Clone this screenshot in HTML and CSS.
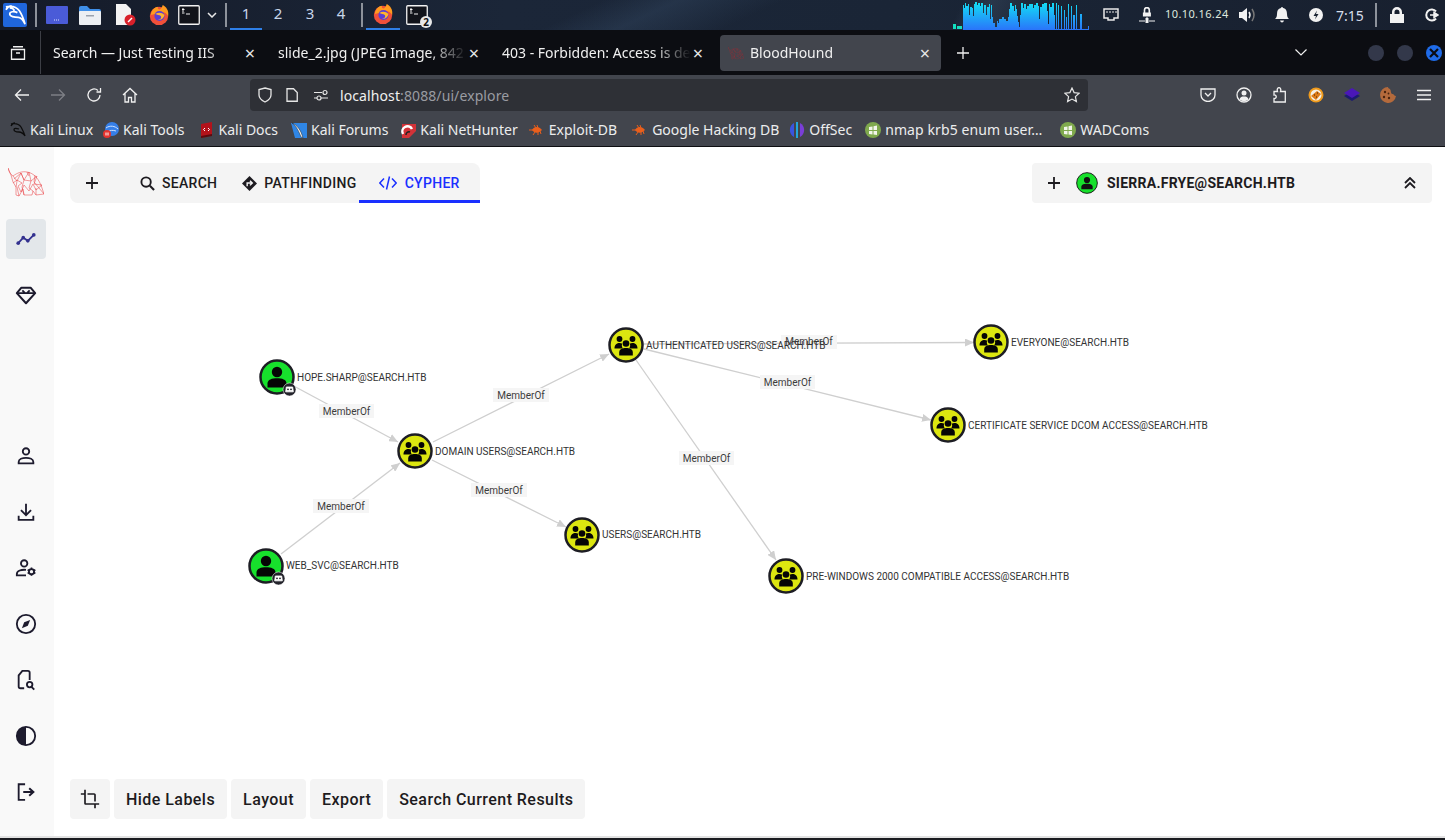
FILE: index.html
```html
<!DOCTYPE html>
<html lang="en">
<head>
    <meta charset="UTF-8">
    <title>BloodHound</title>
    <link rel="stylesheet" href="styles.css">
</head>
<body>

    <svg class="sprites" width="0" height="0">
        <defs>
            <linearGradient id="wave" x1="0" y1="0" x2="0" y2="1">
                <stop offset="0" stop-color="#12e0f5"/>
                <stop offset="1" stop-color="#2a74fa"/>
            </linearGradient>
            <marker id="arrow" markerUnits="userSpaceOnUse" markerWidth="10" markerHeight="8" refX="9" refY="4" orient="auto">
                <path d="M0 0L9 4L0 8z" fill="#cfcfcf"/>
            </marker>
            <symbol id="fox" viewBox="0 0 24 24">
                <circle cx="12" cy="13" r="10" fill="#f0503a"/>
                <path d="M3 12C4 6 8 3 11 3c-1 2 0 3 2 3 2-2 3-4 3-5 4 2 7 6 6 12-2-3-4-4-6-4z" fill="#ff9a1f"/>
                <circle cx="12.500" cy="13" r="5.500" fill="#5a3fd6"/>
                <path d="M8 11c3-2 7-2 10 1-1 4-4 6-7 5 3 0 4-2 3-4-2-1-4-1-6-2z" fill="#ffb52e"/>
            </symbol>
            <symbol id="term" viewBox="0 0 22 20">
                <rect x="0.750" y="0.750" width="20.500" height="18.500" rx="1" fill="#11131a" stroke="#f2f2f2" stroke-width="1.300"/>
                <path d="M4 4.500h2.500M5 3v4M4 8h2.500M8 9h4" stroke="#f2f2f2" stroke-width="1" fill="none"/>
            </symbol>
            <symbol id="hound" viewBox="0 0 36 30">
                <g fill="none" stroke="currentColor" stroke-width="0.500">
                    <path d="M0 1C1 5 2 7 5 9 9 6 14 4 19 5 26 6 31 12 34 21L36 27 28 28 25 24 24 28 16 28 15 22 11 29 8 28 8 20 5 15 3 8z"/>
                    <path d="M5 9l4 5 4-8 3 7 5-8 2 9 6-5-3 8 8 1-6 5-3-6-4 7-5-6-3 7-3-6 4-3-5-3-4 3M13 6l3 7 7 1M9 14l-1 6M16 13l-2 7M23 14l-2 7M26 15l5 6M21 21l4 3M28 21l0 7M14 20l2 8M31 21l5 6M9 20l2 9M19 5l2 4M27 8l-1 7M6 12l7-6"/>
                </g>
            </symbol>
            <symbol id="user" viewBox="-12 -12 24 24">
                <circle cx="0" cy="-5" r="5.200"/>
                <path d="M-9.500 10.500V6.500C-9.500 2.500-5 1.200 0 1.200S9.500 2.500 9.500 6.500V10.500z"/>
            </symbol>
            <symbol id="group" viewBox="-12 -12 24 24">
                <circle cx="-6.500" cy="-6" r="2.900"/>
                <circle cx="6.500" cy="-6" r="2.900"/>
                <path d="M-11.500 3.500C-11.500-.5-9-2-6.500-2c1.200 0 2 .3 2.800.8-.8 1.200-.6 3 .6 4.700z"/>
                <path d="M11.500 3.500C11.500-.5 9-2 6.500-2c-1.200 0-2 .3-2.800.8.800 1.200.6 3-.6 4.700z"/>
                <circle cx="0" cy="-1.500" r="3.300"/>
                <path d="M-6.800 10.500V7.500C-6.800 4-3.500 3 0 3S6.800 4 6.800 7.500V10.500z"/>
            </symbol>
            <symbol id="robot" viewBox="-6 -6 12 12">
                <path d="M-3.800-3H3.800L4.600 2.800H-4.600z" fill="#fff" stroke="#fff" stroke-linejoin="round"/>
                <circle cx="-1.800" cy="-.2" r="1.100" fill="#23232b"/>
                <circle cx="1.800" cy="-.2" r="1.100" fill="#23232b"/>
            </symbol>
        </defs>
    </svg>

    <header class="panel">
        <div class="kali-logo">
            <svg viewBox="0 0 24 24" width="23" height="23"><path d="M2 3c6-1.500 11 0 14 4 2 3 4 7 6 14-2-4-5-7-7-7-4 0-9-1-9-3.500S10 7 14 9M8 2C6 2 4 3 2 6M6 4c2 0 4 1 5 3" fill="none" stroke="#fff" stroke-width="1.800"/></svg>
        </div>
        <span class="panel-sep"></span>
        <div class="launchers">
            <svg class="launch" viewBox="0 0 22 18" width="22" height="18"><rect width="22" height="18" rx="1" fill="#4a5bd8"/><path d="M8 14h6" stroke="#dfe3ff" stroke-dasharray="1 1"/></svg>
            <svg class="launch" viewBox="0 0 22 19" width="22" height="19"><path d="M0 2q0-2 2-2h6l3 3h9q2 0 2 2v2H0z" fill="#3f8fe8"/><rect y="5" width="22" height="14" rx="1" fill="#eceff3"/><rect x="7" y="9" width="8" height="1.500" fill="#9aa2ad"/></svg>
            <svg class="launch launch-doc" viewBox="0 0 22 22" width="22" height="22"><path d="M1 0h10l5 5v16H1z" fill="#f3f3f3"/><circle cx="15" cy="16" r="5.500" fill="#d8202a"/><path d="M13 18l4-4" stroke="#fff" stroke-width="1.500"/></svg>
            <svg class="launch" width="22" height="22"><use href="#fox"/></svg>
            <svg class="launch launch-term" width="22" height="20"><use href="#term"/></svg>
            <svg class="panel-chev" viewBox="0 0 10 6" width="10" height="6"><path d="M1 1l4 4 4-4" fill="none" stroke="#e8e8e8" stroke-width="1.500"/></svg>
        </div>
        <span class="panel-sep sep-work"></span>
        <nav class="workspaces">
            <span class="ws ws-on">1</span>
            <span class="ws">2</span>
            <span class="ws">3</span>
            <span class="ws">4</span>
        </nav>
        <span class="panel-sep"></span>
        <div class="task task-on"><svg width="22" height="22"><use href="#fox"/></svg></div>
        <div class="task"><svg width="22" height="20"><use href="#term"/></svg><span class="task-count">2</span></div>

        <div class="tray">
            <svg class="wave-dots" viewBox="0 0 9 5" width="9" height="5"><path d="M0 0h3v5H0zM4 2h5v3H4z" fill="#12e0c0"/></svg>
            <svg class="wave" viewBox="0 0 128 29" width="128" height="29"><path d="M0 29V4H1V7H2V2H3V5H5V3H6V14H7V6H9V7H10V15H11V3H12V1H14V4H15V2H17V5H18V2H20V12H21V4H23V14H24V6H26V3H27V18H28V4H29V16H30V22H32V26H34V20H35V22H36V18H39V16H41V18H43V20H45V16H46V8H47V2H49V5H51V10H52V4H53V8H54V15H55V21H56V26H57V14H58V2H60V7H61V3H63V8H64V5H66V3H70V7H71V4H73V2H75V5H76V18H77V6H79V3H81V2H84V10H85V23H86V3H87V6H89V2H91V14H92V28H93V2H94V28H95V4H96V28H98V5H99V28H101V9H102V28H103V16H104V28H105V3H106V28H108V5H109V28H110V14H112V28H113V4H114V28H117V13H119V28H125V25H126V29z" fill="url(#wave)"/></svg>
            <svg class="tray-net" viewBox="0 0 16 14" width="16" height="14"><path d="M1 1h14v9h-4v2H5v-2H1z" fill="none" stroke="#e9e9e9" stroke-width="1.500"/><path d="M4 3v2M7 3v2M10 3v2M13 3v2" stroke="#e9e9e9"/></svg>
            <svg class="tray-vpn" viewBox="0 0 16 16" width="16" height="16"><path d="M4 8V5a4 4 0 0 1 8 0v3h1v5H3V8zm2 0h4V5a2 2 0 0 0-4 0z" transform="translate(1.500 -1) scale(.8)" fill="#f2f2f2"/><path d="M0 14h6M10 14h6M7 11h2v5H7z" stroke="#f2f2f2" fill="#f2f2f2"/></svg>
            <span class="tray-ip">10.10.16.24</span>
            <svg class="tray-vol" viewBox="0 0 18 16" width="18" height="16"><path d="M0 5h3l5-4v14l-5-4H0z" fill="#f2f2f2"/><path d="M10 5q2 3 0 6" stroke="#f2f2f2" stroke-width="1.500" fill="none"/><path d="M13 2q4 6 0 12" stroke="#777" stroke-width="1.500" fill="none"/></svg>
            <svg class="tray-bell" viewBox="0 0 14 16" width="14" height="16"><path d="M7 0c1 0 1 1 1 1 3 .5 4 3 4 6 0 3 1 4 2 5H0c1-1 2-2 2-5 0-3 1-5.500 4-6 0 0 0-1 1-1zM5 13.500h4q-.5 2-2 2t-2-2z" fill="#f2f2f2"/></svg>
            <svg class="tray-power" viewBox="0 0 14 14" width="14" height="14"><circle cx="7" cy="7" r="7" fill="#f2f2f2"/><path d="M8 2.500L4.500 8H7l-1 3.500L9.500 6H7z" fill="#1b2433"/></svg>
            <span class="tray-clock">7:15</span>
            <span class="panel-sep sep-tray"></span>
            <svg class="tray-lock" viewBox="0 0 14 16" width="14" height="16"><path d="M2 7V5a5 5 0 0 1 10 0v2h2v9H0V7zm2.500 0h5V5a2.500 2.500 0 0 0-5 0z" fill="#f2f2f2"/></svg>
            <svg class="tray-out" viewBox="0 0 14 14" width="14" height="14"><path d="M11 3.500A5.500 5.500 0 1 0 11 10.500" fill="none" stroke="#f2f2f2" stroke-width="2"/><path d="M5 7h6M9 4.500l4 2.500-4 2.500z" stroke="#f2f2f2" fill="#f2f2f2" stroke-width="1.500"/></svg>
        </div>
    </header>

    <div class="tabbar">
        <div class="tab-view">
            <svg viewBox="0 0 16 14" width="16" height="14"><path d="M3 .750h10M1.500 3.500h13v9.750h-13zM6 7h4" fill="none" stroke="#f0f0f0" stroke-width="1.300"/></svg>
        </div>
        <div class="tab">
            <span class="tab-title">Search — Just Testing IIS</span>
            <span class="tab-close">×</span>
        </div>
        <div class="tab">
            <span class="tab-title">slide_2.jpg (JPEG Image, 842 × 1024 pixels)</span>
            <span class="tab-close">×</span>
        </div>
        <div class="tab">
            <span class="tab-title">403 - Forbidden: Access is denied.</span>
            <span class="tab-close">×</span>
        </div>
        <div class="tab tab-on">
            <svg class="tab-fav" width="16" height="14"><use href="#hound"/></svg>
            <span class="tab-title">BloodHound</span>
            <span class="tab-close">×</span>
        </div>
        <svg class="tab-plus" viewBox="0 0 12 12" width="12" height="12"><path d="M6 0v12M0 6h12" stroke="#f0f0f0" stroke-width="1.300"/></svg>
        <svg class="tab-list" viewBox="0 0 12 7" width="12" height="7"><path d="M.5.5L6 6 11.500.5" fill="none" stroke="#f0f0f0" stroke-width="1.200"/></svg>
        <div class="win-buttons">
            <span class="win-btn"></span>
            <span class="win-btn"></span>
            <span class="win-btn win-close">
                <svg viewBox="0 0 10 10" width="10" height="10"><path d="M1 1l8 8M9 1l-8 8" stroke="#0b0d14" stroke-width="2.200"/></svg>
            </span>
        </div>
    </div>

    <div class="navbar">
        <div class="nav-btns">
            <svg viewBox="0 0 16 14" width="16" height="14"><path d="M15 7H2M7 1.500L1.500 7 7 12.500" fill="none" stroke="#f0f0f0" stroke-width="1.300"/></svg>
            <svg viewBox="0 0 16 14" width="16" height="14"><path d="M1 7h13M9 1.500L14.500 7 9 12.500" fill="none" stroke="#7d7f85" stroke-width="1.300"/></svg>
            <svg viewBox="0 0 16 16" width="16" height="16"><path d="M14 8a6 6 0 1 1-2-4.500M14.500 1v4h-4" fill="none" stroke="#f0f0f0" stroke-width="1.300"/></svg>
            <svg viewBox="0 0 16 16" width="16" height="16"><path d="M1 8l7-6.500L15 8M3 6.500V15h3.500v-4.500h3V15H13V6.500" fill="none" stroke="#f0f0f0" stroke-width="1.300"/></svg>
        </div>
        <div class="urlbar">
            <svg class="url-shield" viewBox="0 0 14 16" width="14" height="16"><path d="M7 1l6 1.500V8c0 3.500-3 5.500-6 7-3-1.500-6-3.500-6-7V2.500z" fill="none" stroke="#e6e6e6" stroke-width="1.300"/></svg>
            <svg class="url-page" viewBox="0 0 12 14" width="12" height="14"><path d="M1 .750h6.500l3.750 3.750v8.750H1z" fill="none" stroke="#e6e6e6" stroke-width="1.300"/></svg>
            <svg class="url-perm" viewBox="0 0 14 12" width="14" height="12"><path d="M0 3.500h8M0 9h3M7 9h7" stroke="#e6e6e6" stroke-width="1.200"/><circle cx="11" cy="3.500" r="2" fill="none" stroke="#e6e6e6" stroke-width="1.200"/><circle cx="5" cy="9" r="2" fill="none" stroke="#e6e6e6" stroke-width="1.200"/></svg>
            <span class="url-text">localhost<span class="url-dim">:8088/ui/explore</span></span>
            <svg class="url-star" viewBox="0 0 16 16" width="16" height="16"><path d="M8 1l2.100 4.600 5 .6-3.700 3.400 1 5L8 12.100 3.600 14.600l1-5L.9 6.200l5-.6z" fill="none" stroke="#e6e6e6" stroke-width="1.200"/></svg>
        </div>
        <div class="nav-tools">
            <span class="tool"><svg viewBox="0 0 16 14" width="16" height="14"><path d="M1 1h14v6a7 6.500 0 0 1-14 0z M5 5l3 3 3-3" fill="none" stroke="#f0f0f0" stroke-width="1.300"/></svg></span>
            <span class="tool"><svg viewBox="0 0 16 16" width="16" height="16"><circle cx="8" cy="8" r="7" fill="none" stroke="#f0f0f0" stroke-width="1.300"/><circle cx="8" cy="6" r="2.500" fill="#f0f0f0"/><path d="M3.500 12.500C4 10 6 9.500 8 9.500s4 .5 4.500 3a6.500 6.500 0 0 1-9 0z" fill="#f0f0f0"/></svg></span>
            <span class="tool"><svg viewBox="0 0 14 16" width="14" height="16"><path d="M1 4.500h3.500C3.500 2 5 .7 6 .7s2.500 1.300 1.500 3.800H12.300V15H1v-3.500c3 .5 3-4 0-3.500z" fill="none" stroke="#f0f0f0" stroke-width="1.300"/></svg></span>
            <span class="tool"><svg viewBox="0 0 16 16" width="16" height="16"><circle cx="8" cy="8" r="7.500" fill="#ef9a1c"/><circle cx="8" cy="8" r="5.500" fill="#f4f0e6"/><path d="M3 9l6-5 4 3-5 6z" fill="#dd7b17"/><path d="M6 8h1M9 6h1M8 10h1" stroke="#402006"/></svg></span>
            <span class="tool"><svg viewBox="0 0 16 16" width="16" height="16"><path d="M8 4l8 5-8 5-8-5z" fill="#1c1b70"/><path d="M8 1l8 5-8 5-8-5z" fill="#4a17b8"/></svg></span>
            <span class="tool"><svg viewBox="0 0 16 16" width="16" height="16"><path d="M8 0a8 8 0 1 0 8 9c-2 0-2-2-3.500-2S11 5 10.500 3 8 2 8 0z" fill="#b46a3c"/><circle cx="5" cy="5" r="1.200" fill="#4a2410"/><circle cx="4" cy="10" r="1.200" fill="#4a2410"/><circle cx="9" cy="11" r="1.200" fill="#4a2410"/><circle cx="8.500" cy="6.500" r=".9" fill="#4a2410"/></svg></span>
            <span class="tool"><svg viewBox="0 0 14 12" width="14" height="12"><path d="M0 1.500h14M0 6h14M0 10.500h14" stroke="#f0f0f0" stroke-width="1.300"/></svg></span>
        </div>
    </div>

    <div class="bookmarks">
        <a class="bm bm-linux"><svg viewBox="0 0 16 16" width="16" height="16"><path d="M1 2c5-1 8 0 10 3 1 2 3 5 4 9-2-3-4-4-6-4-3 0-5-1-5-2.500S6 6 9 7M5 1C3 1 2 2 1 4" fill="none" stroke="#0d0d0d" stroke-width="1.300"/></svg>Kali Linux</a>
        <a class="bm bm-tools"><svg viewBox="0 0 16 16" width="16" height="16"><circle cx="9" cy="7" r="7" fill="#367fe8"/><path d="M3 6c4-3 9-2 12 1M5 10c2-2 5-2 8-1" stroke="#cfe2ff" fill="none"/><circle cx="4" cy="12" r="4" fill="#e5322d"/><path d="M3 10.500v3M5 10.500v3" stroke="#fff"/></svg>Kali Tools</a>
        <a class="bm bm-docs"><svg viewBox="0 0 16 16" width="16" height="16"><path d="M2 2l11-2v13l-11 3z" fill="#b3131b"/><path d="M2 14l11-2v2l-11 2z" fill="#5c0a0e"/><path d="M6 6L4.500 7.500 6 9M9 6l1.500 1.500L9 9" stroke="#fff" fill="none"/></svg>Kali Docs</a>
        <a class="bm bm-forums"><svg viewBox="0 0 16 16" width="16" height="16"><path d="M0 1h16v15H4z" fill="#2f86e6"/><path d="M1 1c3 2 6 6 9 14l2 1C10 8 6 3 1 1z" fill="#f4f4f4" stroke="#222" stroke-width=".5"/></svg>Kali Forums</a>
        <a class="bm bm-net"><svg viewBox="0 0 16 16" width="16" height="16"><path d="M2 2h14v7l-7 7H2z" fill="#d23238"/><path d="M3 12a5 5 0 0 1 9-5" fill="none" stroke="#fff" stroke-width="2.500"/><path d="M6 13a3 3 0 0 1 4-3" stroke="#222" stroke-width="1.500" fill="none"/></svg>Kali NetHunter</a>
        <a class="bm bm-edb"><svg class="bug" viewBox="0 0 16 12" width="16" height="16"><path d="M3 6c2-4 7-4 10 0-3 3-7 4-10 0z" fill="#ea5f1c"/><path d="M0 6h4M5 1l2 3M8 1l1 3M4 11l2-3M9 11l0-3M12 10l-1-3" stroke="#ea5f1c"/></svg>Exploit-DB</a>
        <a class="bm bm-ghdb"><svg class="bug" viewBox="0 0 16 12" width="16" height="16"><path d="M3 6c2-4 7-4 10 0-3 3-7 4-10 0z" fill="#ea5f1c"/><path d="M0 6h4M5 1l2 3M8 1l1 3M4 11l2-3M9 11l0-3M12 10l-1-3" stroke="#ea5f1c"/></svg>Google Hacking DB</a>
        <a class="bm bm-off"><svg viewBox="0 0 16 16" width="16" height="16"><path d="M5 1a8 8 0 0 0 0 14z" fill="#3a54e0"/><path d="M11 1a8 8 0 0 1 0 14z" fill="#7a3ed8"/><path d="M7 0h2v16H7z" fill="#22a6dc"/></svg>OffSec</a>
        <a class="bm bm-nmap"><svg viewBox="0 0 16 16" width="16" height="16"><circle cx="8" cy="8" r="8" fill="#7fa94d"/><path d="M4 5l3.500-.6V8H4zM8.500 4.200L12 3.500V8H8.500zM4 9h3.500v3.500L4 12zM8.500 9H12v4l-3.500-.6z" fill="#f2f5ea"/></svg>nmap krb5 enum user…</a>
        <a class="bm bm-wad"><svg viewBox="0 0 16 16" width="16" height="16"><circle cx="8" cy="8" r="8" fill="#7fa94d"/><path d="M4 5l3.500-.6V8H4zM8.500 4.200L12 3.500V8H8.500zM4 9h3.500v3.500L4 12zM8.500 9H12v4l-3.500-.6z" fill="#f2f5ea"/></svg>WADComs</a>
    </div>

    <div class="app">
        <aside class="sidebar">
            <svg class="side-logo" width="36" height="30"><use href="#hound"/></svg>
            <span class="side-item side-on"><svg viewBox="0 0 24 24" width="22" height="22"><path d="M3.500 16.500L9 10.500l5 3.500 6.500-6.500" fill="none" stroke="currentColor" stroke-width="2"/><circle cx="3.500" cy="16.500" r="2"/><circle cx="9" cy="10.500" r="2"/><circle cx="14" cy="14" r="2"/><circle cx="20.500" cy="7.500" r="2"/></svg></span>
            <span class="side-item"><svg viewBox="0 0 24 24" width="22" height="22"><path d="M7 4h10l5 6-10 11L2 10z" fill="none" stroke="currentColor" stroke-width="2.200" stroke-linejoin="round"/><path d="M3 10h18M8 7l3 3M16 7l-3 3" stroke="currentColor" stroke-width="2"/></svg></span>
            <div class="side-bottom">
                <span class="side-item"><svg viewBox="0 0 24 24" width="22" height="22"><circle cx="12" cy="7" r="3.500" fill="none" stroke="currentColor" stroke-width="2"/><path d="M4 20v-1.500C4 15.500 8 14 12 14s8 1.500 8 4.500V20z" fill="none" stroke="currentColor" stroke-width="2"/></svg></span>
                <span class="side-item"><svg viewBox="0 0 24 24" width="22" height="22"><path d="M12 3v12M6.500 10l5.500 5.500 5.500-5.500" fill="none" stroke="currentColor" stroke-width="2"/><path d="M4 16v4.500h16V16" fill="none" stroke="currentColor" stroke-width="2"/></svg></span>
                <span class="side-item"><svg viewBox="0 0 24 24" width="22" height="22"><circle cx="10" cy="7" r="3.500" fill="none" stroke="currentColor" stroke-width="2"/><path d="M12 14c-5-.5-10 1-10 4.500V20h10" fill="none" stroke="currentColor" stroke-width="2"/><circle cx="18" cy="16" r="2.800" fill="none" stroke="currentColor" stroke-width="2"/><path d="M18 11.500v2M18 18.500v2M13.800 14l1.700 1M20.500 17l1.700 1M13.800 18l1.700-1M20.500 15l1.700-1" stroke="currentColor" stroke-width="1.800"/></svg></span>
                <span class="side-item"><svg viewBox="0 0 24 24" width="22" height="22"><circle cx="12" cy="12" r="10" fill="none" stroke="currentColor" stroke-width="2"/><path d="M16.500 7.500l-2.500 6.500-6.500 2.500 2.500-6.500z"/></svg></span>
                <span class="side-item"><svg viewBox="0 0 24 24" width="22" height="22"><path d="M10 21H6q-2 0-2-2V7l4-5h6q2 0 2 2v8" fill="none" stroke="currentColor" stroke-width="2"/><circle cx="16" cy="17" r="3" fill="none" stroke="currentColor" stroke-width="2"/><path d="M18 19.500l3 3" stroke="currentColor" stroke-width="2.200"/></svg></span>
                <span class="side-item"><svg viewBox="0 0 24 24" width="22" height="22"><circle cx="12" cy="12" r="10" fill="none" stroke="currentColor" stroke-width="2"/><path d="M12 2a10 10 0 0 0 0 20z"/></svg></span>
                <span class="side-item"><svg viewBox="0 0 24 24" width="22" height="22"><path d="M11 3.500H4v17h7" fill="none" stroke="currentColor" stroke-width="2"/><path d="M9 12h11M15.500 8l4.500 4-4.500 4" fill="none" stroke="currentColor" stroke-width="2.200"/></svg></span>
            </div>
        </aside>

        <main class="explore">
            <svg class="graph" viewBox="54 147 1391 690" width="1391" height="690">
                <g class="edges">
                    <line x1="290" y1="384" x2="398" y2="442"/>
                    <line x1="281" y1="554" x2="400" y2="463"/>
                    <line x1="433" y1="442" x2="609" y2="354"/>
                    <line x1="432" y1="460" x2="566" y2="527"/>
                    <line x1="643" y1="344" x2="974" y2="342.500"/>
                    <line x1="644" y1="349" x2="931" y2="420"/>
                    <line x1="636" y1="360" x2="776" y2="560"/>
                </g>

                <g class="edge-label"><rect x="319" y="404" width="55" height="14"/><text x="346.500" y="414.500">MemberOf</text></g>
                <g class="edge-label"><rect x="313" y="499" width="56" height="14"/><text x="341" y="509.500">MemberOf</text></g>
                <g class="edge-label"><rect x="493" y="388" width="56" height="14"/><text x="521" y="398.500">MemberOf</text></g>
                <g class="edge-label"><rect x="471" y="483" width="56" height="14"/><text x="499" y="493.500">MemberOf</text></g>
                <g class="edge-label"><rect x="781" y="335" width="56" height="14"/><text x="809" y="344.500">MemberOf</text></g>
                <g class="edge-label"><rect x="760" y="375" width="55" height="14"/><text x="787.500" y="385.500">MemberOf</text></g>
                <g class="edge-label"><rect x="679" y="451" width="55" height="14"/><text x="706.500" y="461.500">MemberOf</text></g>

                <g class="node node-user">
                    <circle cx="277" cy="377" r="16.500"/>
                    <use href="#user" x="265" y="365" width="24" height="24"/>
                    <circle class="badge" cx="289.500" cy="389.500" r="6.500"/>
                    <use href="#robot" x="284.500" y="384.500" width="10" height="10"/>
                    <text x="297" y="380.500">HOPE.SHARP@SEARCH.HTB</text>
                </g>
                <g class="node node-user">
                    <circle cx="266" cy="566" r="16.500"/>
                    <use href="#user" x="254" y="554" width="24" height="24"/>
                    <circle class="badge" cx="278.500" cy="578.500" r="6.500"/>
                    <use href="#robot" x="273.500" y="573.500" width="10" height="10"/>
                    <text x="286" y="568.500">WEB_SVC@SEARCH.HTB</text>
                </g>
                <g class="node node-group">
                    <circle cx="415" cy="451" r="16.500"/>
                    <use href="#group" x="403" y="439" width="24" height="24"/>
                    <text x="435" y="454.500">DOMAIN USERS@SEARCH.HTB</text>
                </g>
                <g class="node node-group">
                    <circle cx="582" cy="535" r="16.500"/>
                    <use href="#group" x="570" y="523" width="24" height="24"/>
                    <text x="602" y="537.500">USERS@SEARCH.HTB</text>
                </g>
                <g class="node node-group">
                    <circle cx="626" cy="345" r="16.500"/>
                    <use href="#group" x="614" y="333" width="24" height="24"/>
                    <text x="646" y="348.500">AUTHENTICATED USERS@SEARCH.HTB</text>
                </g>
                <g class="node node-group">
                    <circle cx="991" cy="342" r="16.500"/>
                    <use href="#group" x="979" y="330" width="24" height="24"/>
                    <text x="1011" y="345.500">EVERYONE@SEARCH.HTB</text>
                </g>
                <g class="node node-group">
                    <circle cx="948" cy="425" r="16.500"/>
                    <use href="#group" x="936" y="413" width="24" height="24"/>
                    <text x="968" y="428.500">CERTIFICATE SERVICE DCOM ACCESS@SEARCH.HTB</text>
                </g>
                <g class="node node-group">
                    <circle cx="786" cy="576" r="16.500"/>
                    <use href="#group" x="774" y="564" width="24" height="24"/>
                    <text x="806" y="579.500">PRE-WINDOWS 2000 COMPATIBLE ACCESS@SEARCH.HTB</text>
                </g>
            </svg>

            <div class="top-row">
                <div class="search-card">
                    <svg class="card-plus" viewBox="0 0 12 12" width="12" height="12"><path d="M6 0v12M0 6h12" stroke="currentColor" stroke-width="1.800"/></svg>
                    <button class="mode mode-search">
                        <svg viewBox="0 0 16 16" width="15" height="15"><circle cx="6.500" cy="6.500" r="5" fill="none" stroke="currentColor" stroke-width="2"/><path d="M10.500 10.500L15 15" stroke="currentColor" stroke-width="2.200"/></svg>
                        SEARCH
                    </button>
                    <button class="mode mode-path">
                        <svg viewBox="0 0 16 16" width="15" height="15"><path d="M8 0l8 8-8 8-8-8z" fill="currentColor"/><path d="M5.500 11V7.500h5M8.500 5l2.500 2.500L8.500 10" fill="none" stroke="#f4f4f4" stroke-width="1.500"/></svg>
                        PATHFINDING
                    </button>
                    <button class="mode mode-on">
                        <svg viewBox="0 0 18 14" width="18" height="14"><path d="M5 2.500L.8 7 5 11.500M13 2.500L17.200 7 13 11.500M10.500.5l-3 13" fill="none" stroke="currentColor" stroke-width="1.500"/></svg>
                        CYPHER
                    </button>
                </div>
                <div class="entity-card">
                    <svg class="card-plus" viewBox="0 0 12 12" width="12" height="12"><path d="M6 0v12M0 6h12" stroke="currentColor" stroke-width="1.800"/></svg>
                    <svg class="entity-avatar" viewBox="-12 -12 24 24" width="22" height="22"><circle r="11.300" fill="#17e02c" stroke="#111" stroke-width="1"/><g transform="scale(.65)"><circle cy="-5" r="5.200" fill="#111"/><path d="M-9.500 10.500V6.500C-9.500 2.500-5 1.200 0 1.200S9.500 2.500 9.500 6.500V10.500z" fill="#111"/></g></svg>
                    <span class="entity-name">SIERRA.FRYE@SEARCH.HTB</span>
                    <svg class="entity-toggle" viewBox="0 0 12 12" width="12" height="12"><path d="M1 6l5-5 5 5M1 11l5-5 5 5" fill="none" stroke="currentColor" stroke-width="1.800"/></svg>
                </div>
            </div>

            <div class="actions">
                <button class="act act-icon"><svg viewBox="0 0 24 24" width="20" height="20"><path d="M17 15h2V7c0-1.100-.9-2-2-2H9v2h8v8zM7 17V1H5v4H1v2h4v10c0 1.100.9 2 2 2h10v4h2v-4h4v-2H7z" fill="currentColor"/></svg></button>
                <button class="act">Hide Labels</button>
                <button class="act">Layout</button>
                <button class="act">Export</button>
                <button class="act">Search Current Results</button>
            </div>
        </main>
    </div>

    <div class="os-edge"></div>

</body>
</html>
```

FILE: styles.css
```css
* {
    box-sizing: border-box;
}

html, body {
    margin: 0;
    height: 840px;
    overflow: hidden;
}

body {
    display: flex;
    flex-direction: column;
    width: 1445px;
    font-family: 'Noto Sans', sans-serif;
    background: #fff;
}

.sprites {
    position: absolute;
}

svg {
    display: block;
    flex: none;
}

/* desktop panel */
.panel {
    display: flex;
    align-items: center;
    height: 30px;
    flex: none;
    color: #e8edf5;
    background:
        linear-gradient(115deg, transparent 66%, rgba(70, 90, 115, 0.35) 68%, transparent 72%),
        linear-gradient(155deg, transparent 40%, rgba(60, 85, 115, 0.3) 45%, transparent 52%),
        linear-gradient(90deg, #151b29 0%, #1b2638 35%, #1a2536 62%, #18202f 100%);
}

.kali-logo {
    display: flex;
    align-items: center;
    justify-content: center;
    width: 24px;
    height: 24px;
    margin-left: 3px;
    background: #1f66dc;
    border-radius: 2px;
}

.panel-sep {
    width: 2px;
    height: 24px;
    background: #8d929b;
}

.panel-sep:first-of-type {
    margin-left: 8px;
}

.launchers {
    display: flex;
    align-items: center;
    margin-left: 9px;
}

.launch {
    margin-right: 11px;
}

.launch-doc {
    margin-left: 3px;
    margin-right: 11px;
}

.launch-term {
    margin-left: -3px;
}

.panel-chev {
    margin-left: -4px;
}

.sep-work {
    margin-left: 8px;
}

.workspaces {
    display: flex;
    margin-left: 3px;
    margin-right: 2px;
    width: 129px;
}

.ws {
    width: 32px;
    height: 30px;
    line-height: 27px;
    text-align: center;
    font-size: 15px;
    color: #c8d6ea;
}

.ws:nth-child(4) {
    margin-left: -1px;
}

.ws-on {
    border-bottom: 2px solid #2e7fe8;
}

.task {
    position: relative;
    display: flex;
    align-items: center;
    justify-content: center;
    width: 34px;
    height: 30px;
    margin-left: 3px;
}

.task + .task {
    margin-left: 0;
    width: 40px;
    padding-right: 6px;
    padding-left: 6px;
    justify-content: flex-start;
}

.task-on {
    border-bottom: 2px solid #2e7fe8;
}

.task-count {
    position: absolute;
    left: 20px;
    top: 16px;
    width: 12px;
    height: 12px;
    border-radius: 50%;
    background: #e8e8e8;
    color: #111;
    font-size: 10px;
    font-weight: 700;
    line-height: 12px;
    text-align: center;
}

.tray {
    display: flex;
    align-items: center;
    margin-left: auto;
    height: 30px;
}

.wave-dots {
    align-self: flex-end;
    margin-bottom: 1px;
    margin-right: 1px;
}

.wave {
    margin-right: 12px;
}

.tray-net {
    margin-right: 20px;
}

.tray-vpn {
    margin-right: 10px;
}

.tray-ip {
    width: 65px;
    font-size: 11px;
    letter-spacing: 0.4px;
    color: #dfe8df;
    white-space: nowrap;
    margin-bottom: 3px;
}

.tray-vol {
    margin-left: 9px;
    margin-right: 18px;
}

.tray-bell {
    margin-right: 20px;
}

.tray-power {
    margin-right: 13px;
}

.tray-clock {
    width: 28px;
    font-size: 14px;
    color: #d6deea;
}

.sep-tray {
    margin-left: 11px;
}

.tray-lock {
    margin-left: 13px;
    margin-right: 21px;
}

.tray-out {
    margin-right: 6px;
}

/* browser tabs */
.tabbar {
    display: flex;
    align-items: center;
    flex: none;
    height: 45px;
    background: #0c0d12;
    color: #f0f0f0;
    font-size: 14px;
}

.tab-view {
    display: flex;
    align-items: center;
    justify-content: center;
    width: 41px;
    height: 43px;
    padding-right: 5px;
    border-right: 1px solid #3c3e45;
}

.tab {
    display: flex;
    align-items: center;
    width: 224px;
    height: 36px;
    padding: 0 5px 0 12px;
}

.tab:nth-child(2) {
    width: 225px;
}

.tab-title {
    flex: 1;
    overflow: hidden;
    white-space: nowrap;
    -webkit-mask-image: linear-gradient(90deg, #000 80%, transparent 100%);
    mask-image: linear-gradient(90deg, #000 80%, transparent 100%);
}

.tab-close {
    width: 22px;
    margin-left: -4px;
    text-align: center;
    font-size: 18px;
    line-height: 18px;
    color: #e8e8e8;
}

.tab-on {
    width: 221px;
    margin-left: 6px;
    padding-left: 8px;
    background: #42454d;
    border-radius: 4px;
}

.tab-fav {
    margin-right: 6px;
    color: #b3252e;
}

.tab-plus {
    margin-left: 16px;
}

.tab-list {
    margin-left: 326px;
}

.win-buttons {
    display: flex;
    gap: 13px;
    margin-left: auto;
    margin-right: 3px;
}

.win-btn {
    display: flex;
    align-items: center;
    justify-content: center;
    width: 16px;
    height: 16px;
    border-radius: 50%;
    background: #33384a;
}

.win-close {
    background: #1f6be8;
}

/* nav + bookmarks */
.navbar {
    display: flex;
    align-items: center;
    flex: none;
    height: 36px;
    padding-top: 4px;
    background: #42454d;
    color: #f0f0f0;
}

.nav-btns {
    display: flex;
    align-items: center;
    gap: 20px;
    width: 250px;
    padding-left: 14px;
}

.urlbar {
    display: flex;
    align-items: center;
    width: 838px;
    height: 32px;
    padding: 0 8px;
    background: #2e3036;
    border-radius: 4px;
    font-size: 14px;
    letter-spacing: 0.1px;
}

.url-page {
    margin-left: 14px;
}

.url-perm {
    margin-left: 16px;
}

.url-text {
    margin-left: 12px;
    color: #f0f0f0;
}

.url-dim {
    color: #9a9ca2;
}

.url-star {
    margin-left: auto;
}

.nav-tools {
    display: flex;
    align-items: center;
    margin-left: 102px;
}

.tool {
    display: flex;
    align-items: center;
    justify-content: center;
    width: 36px;
}

.bookmarks {
    display: flex;
    align-items: center;
    flex: none;
    gap: 12px;
    height: 36px;
    padding: 2px 0 0 10px;
    background: #42454d;
    border-bottom: 1px solid #0e0f12;
    color: #eceded;
    font-size: 14px;
}

.bm {
    display: flex;
    align-items: center;
    gap: 4px;
    white-space: nowrap;
}

.bm-tools {
    margin-left: -2px;
}

.bm-docs {
    margin-left: 2px;
}

.bm-forums {
    margin-left: 1px;
}

.bm-edb {
    margin-left: -1px;
}

.bm-ghdb {
    margin-left: 3px;
}

.bm-off {
    margin-left: -2px;
}

.bm-nmap {
    margin-left: 1px;
    letter-spacing: 0.1px;
}

.bm-wad {
    margin-left: 6px;
}

/* app */
.app {
    display: flex;
    flex: 1;
    min-height: 0;
    background: #fff;
}

.sidebar {
    display: flex;
    flex-direction: column;
    align-items: center;
    gap: 16px;
    flex: none;
    width: 54px;
    padding: 20px 2px 24px 0;
    background: #f9f9f9;
    color: #1d1b2e;
}

.side-logo {
    color: #e8393c;
    margin-bottom: 6px;
}

.side-item {
    display: flex;
    align-items: center;
    justify-content: center;
    width: 40px;
    height: 40px;
    border-radius: 4px;
    fill: currentColor;
}

.side-on {
    background: #e3e7ea;
    color: #33318f;
}

.side-bottom {
    display: flex;
    flex-direction: column;
    gap: 16px;
    margin-top: auto;
}

.explore {
    position: relative;
    display: flex;
    flex-direction: column;
    justify-content: space-between;
    flex: 1;
    padding: 16px 13px 17px 16px;
}

.graph {
    position: absolute;
    left: 0;
    top: 0;
}

.edges line {
    stroke: #cfcfcf;
    stroke-width: 1.300;
    marker-end: url(#arrow);
}

.edge-label rect {
    fill: #f5f5f5;
}

.edge-label text {
    font-family: Roboto, sans-serif;
    font-size: 10px;
    fill: #3c3c3c;
    text-anchor: middle;
}

.node circle {
    stroke: #1d1d24;
    stroke-width: 2.500;
}

.node use {
    fill: #050505;
}

.node text {
    font-family: Roboto, sans-serif;
    font-size: 10px;
    fill: #333;
}

.node-user circle {
    fill: #17e02c;
}

.node-group circle {
    fill: #dce610;
}

.node circle.badge {
    fill: #23232b;
    stroke: #fff;
    stroke-width: 0.500;
}

.top-row {
    position: relative;
    display: flex;
    justify-content: space-between;
    height: 40px;
    font-family: Roboto, sans-serif;
    color: #1d1b20;
}

.search-card {
    display: flex;
    align-items: center;
    width: 410px;
    height: 40px;
    padding-left: 16px;
    background: #f4f4f4;
    border-radius: 8px 8px 0 8px;
}

.mode {
    display: flex;
    align-items: center;
    gap: 7px;
    height: 40px;
    padding: 0;
    border: 0;
    background: none;
    color: inherit;
    font: 500 14px Roboto, sans-serif;
    letter-spacing: 0.3px;
}

.mode-search {
    margin-left: 42px;
}

.mode-path {
    margin-left: 25px;
}

.mode-on {
    width: 121px;
    margin-left: 2px;
    padding-left: 20px;
    gap: 8px;
    color: #1a30ff;
    border-bottom: 3px solid #1a30ff;
    padding-top: 3px;
}

.entity-card {
    display: flex;
    align-items: center;
    width: 400px;
    height: 40px;
    padding-left: 16px;
    background: #f4f4f4;
    border-radius: 4px;
}

.entity-avatar {
    margin-left: 16px;
}

.entity-name {
    margin-left: 9px;
    font-size: 14px;
    font-weight: 700;
    letter-spacing: 0.25px;
}

.entity-toggle {
    margin-left: auto;
    margin-right: 16px;
}

.actions {
    position: relative;
    display: flex;
    gap: 4px;
    font-family: Roboto, sans-serif;
}

.act {
    height: 40px;
    padding: 0 12px;
    border: 0;
    border-radius: 4px;
    background: #f4f4f4;
    color: #1d1b20;
    font: 500 16px Roboto, sans-serif;
    letter-spacing: 0.45px;
}

.act-icon {
    display: flex;
    align-items: center;
    justify-content: center;
    width: 40px;
    padding: 0;
}

.os-edge {
    flex: none;
    height: 4px;
    background: #1a1b20;
    border-top: 2px solid #e2e2e2;
}
```
